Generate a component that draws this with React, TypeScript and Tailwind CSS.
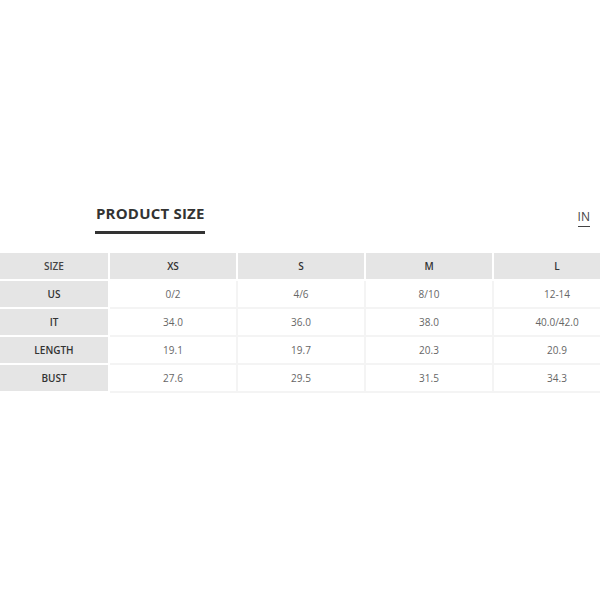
import React from "react"

const cols = ["XS", "S", "M", "L"]

const rows = [
  { label: "US", values: ["0/2", "4/6", "8/10", "12-14"] },
  { label: "IT", values: ["34.0", "36.0", "38.0", "40.0/42.0"] },
  { label: "LENGTH", values: ["19.1", "19.7", "20.3", "20.9"] },
  { label: "BUST", values: ["27.6", "29.5", "31.5", "34.3"] },
]

export default function App() {
  return (
    <div
      className="w-[600px] h-[600px] bg-white overflow-hidden pt-[204px]"
      style={{ fontFamily: '"Open Sans", "Liberation Sans", sans-serif' }}
    >
      <div className="flex items-start justify-between pl-[96px] pr-[10px]">
        <div>
          <h2 className="text-[15px] leading-[18px] font-bold text-[#333] tracking-[0.2px]">PRODUCT SIZE</h2>
          <div className="mt-[9px] h-[3px] w-[110px] bg-[#333] -ml-[1px]" />
        </div>
        <div className="mt-[6px] text-[12px] leading-[14px] text-[#444] border-b border-[#444] pb-[2px]">IN</div>
      </div>

      <div className="mt-[19px] w-[622px] grid grid-cols-[110px_128px_128px_128px_128px] text-[10px] leading-[26px] text-center">
        <div className="bg-[#e5e5e5] border-r-2 border-b-2 border-white font-semibold text-[#444]">SIZE</div>
        {cols.map((c) => (
          <div key={c} className="bg-[#e5e5e5] border-r-2 border-b-2 border-white font-semibold text-[#333]">
            {c}
          </div>
        ))}
        {rows.map((r) => (
          <React.Fragment key={r.label}>
            <div className="bg-[#e5e5e5] border-r-2 border-b-2 border-white font-semibold text-[#333]">{r.label}</div>
            {r.values.map((v, i) => (
              <div key={i} className="bg-white border-r-2 border-b-2 border-[#f4f4f4] text-[#666]">
                {v}
              </div>
            ))}
          </React.Fragment>
        ))}
      </div>
    </div>
  )
}
